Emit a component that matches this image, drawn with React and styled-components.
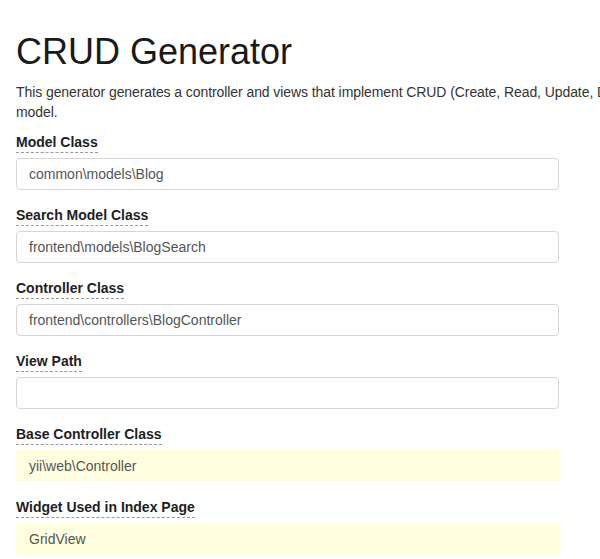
import React from "react";
import styled, { createGlobalStyle } from "styled-components";

const Global = createGlobalStyle`
  html, body {
    margin: 0;
    padding: 0;
    background: #fff;
    overflow: hidden;
  }
  body {
    font-family: "Liberation Sans", Arial, Helvetica, sans-serif;
    font-size: 14px;
    line-height: 20px;
    color: #333;
  }
  * { box-sizing: border-box; }
`;

const Page = styled.div`
  width: 900px;
  padding: 0 16px;
`;

const Title = styled.h1`
  margin: 32px 0 10px;
  font-size: 36px;
  font-weight: 400;
  line-height: 1.1;
  color: #1a1a1a;
`;

const Description = styled.p`
  width: 860px;
  margin: 0 0 10px;
  color: #333;
  letter-spacing: -0.08px;
`;

const Form = styled.div`
  width: 543px;
  display: flex;
  flex-direction: column;
  gap: 15px;
`;

const Group = styled.div`
  display: flex;
  flex-direction: column;
  align-items: flex-start;
`;

const Label = styled.label`
  display: inline-block;
  font-weight: 700;
  color: #1e1e1e;
  line-height: 20px;
  border-bottom: 1px dashed #999;
  margin-bottom: 5px;
`;

const Input = styled.div`
  width: 100%;
  height: 32px;
  padding: 0 12px;
  display: flex;
  align-items: center;
  font-size: 14px;
  color: #555;
  border-radius: ${(p) => (p.$sticky ? "0" : "4px")};
  background: ${(p) => (p.$sticky ? "#ffffe0" : "#fff")};
  border: 1px solid ${(p) => (p.$sticky ? "#ffffe0" : "#d6d6d6")};
`;

const fields = [
  { label: "Model Class", value: "common\\models\\Blog" },
  { label: "Search Model Class", value: "frontend\\models\\BlogSearch" },
  { label: "Controller Class", value: "frontend\\controllers\\BlogController" },
  { label: "View Path", value: "" },
  { label: "Base Controller Class", value: "yii\\web\\Controller", sticky: true },
  { label: "Widget Used in Index Page", value: "GridView", sticky: true },
];

export default function App() {
  return (
    <>
      <Global />
      <Page>
        <Title>CRUD Generator</Title>
        <Description>
          This generator generates a controller and views that implement CRUD
          (Create, Read, Update, Delete) operations for the specified data model.
        </Description>
        <Form>
          {fields.map((f) => (
            <Group key={f.label}>
              <Label>{f.label}</Label>
              <Input $sticky={f.sticky}>{f.value}</Input>
            </Group>
          ))}
        </Form>
      </Page>
    </>
  );
}
